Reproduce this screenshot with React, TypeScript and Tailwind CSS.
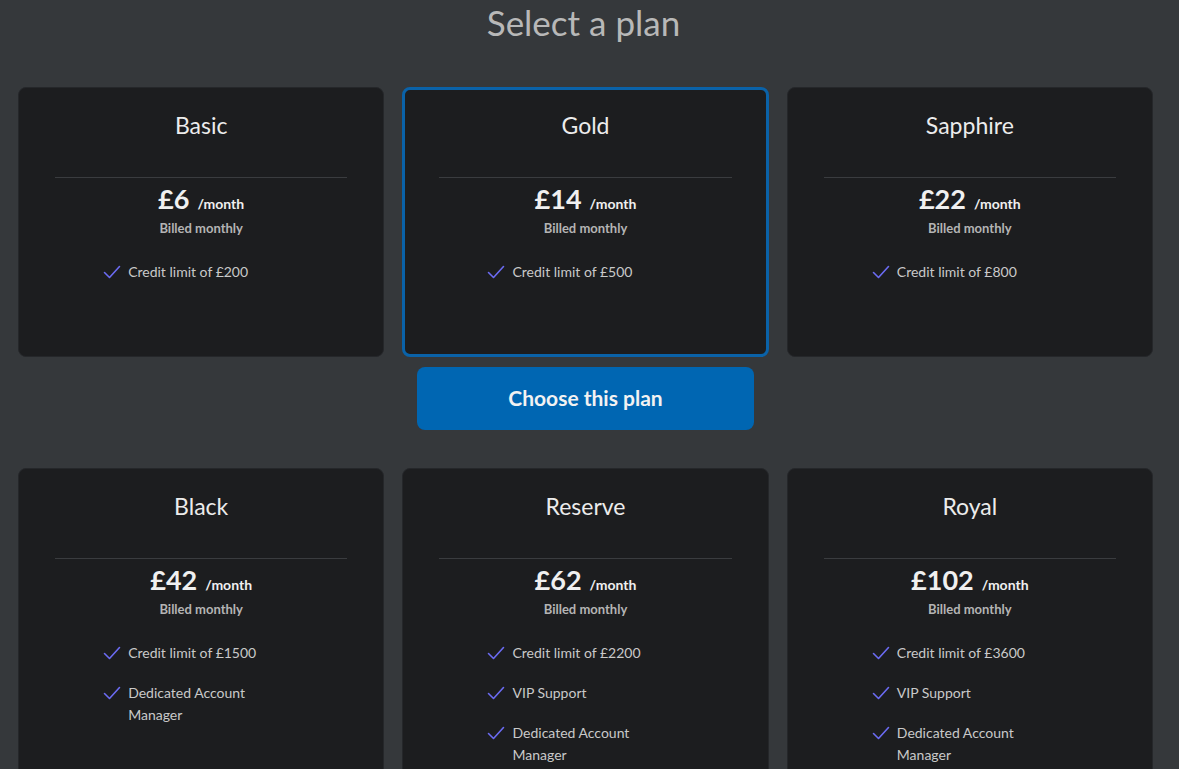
import React from "react";

interface Plan {
    name: string;
    price: number;
    features: string[];
}

const plans: Plan[] = [
    { name: "Basic", price: 6, features: ["Credit limit of £200"] },
    { name: "Gold", price: 14, features: ["Credit limit of £500"] },
    { name: "Sapphire", price: 22, features: ["Credit limit of £800"] },
    { name: "Black", price: 42, features: ["Credit limit of £1500", "Dedicated Account Manager"] },
    { name: "Reserve", price: 62, features: ["Credit limit of £2200", "VIP Support", "Dedicated Account Manager"] },
    { name: "Royal", price: 102, features: ["Credit limit of £3600", "VIP Support", "Dedicated Account Manager"] },
];

const Check = () => (
    <svg width="18" height="14" viewBox="0 0 18 14" fill="none" className="shrink-0 mt-[4px]">
        <path d="M1.5 7.5L6.5 12.5L16.5 1.5" stroke="#6b6bf2" strokeWidth="1.6" strokeLinecap="round" strokeLinejoin="round" />
    </svg>
);

const PlanCard: React.FC<{ plan: Plan; selected: boolean }> = ({ plan, selected }) => (
    <div className="flex flex-col">
        <div
            className={
                selected
                    ? "flex-1 min-h-[270px] rounded-[8px] bg-[#1c1d1f] border-[3px] border-[#0a62a8] pt-[20px] pb-6 flex flex-col items-center"
                    : "flex-1 min-h-[270px] rounded-[8px] bg-[#1c1d1f] border border-[#25272a] pt-[22px] pb-6 flex flex-col items-center"
            }
        >
            <span className="text-[23px] leading-[30px] text-[#ececec]">{plan.name}</span>
            <div className={selected ? "mt-[37px] h-px bg-[#3a3c3f] w-[calc(100%-68px)]" : "mt-[37px] h-px bg-[#3a3c3f] w-[calc(100%-72px)]"} />
            <div className="mt-[3px] flex items-baseline gap-[8px] text-[#f0f0f0] font-bold">
                <span className="text-[27px] leading-[36px]">£{plan.price}</span>
                <span className="text-[14px]">/month</span>
            </div>
            <span className="mt-[3px] text-[13px] leading-[16px] font-bold text-[#b4b4b4]">Billed monthly</span>
            <ul className="mt-[25px] w-[196px] flex flex-col gap-[18px]">
                {plan.features.map((f) => (
                    <li key={f} className="flex gap-[7px] text-[14px] leading-[22px] text-[#c9c9c9]">
                        <Check />
                        <span>{f}</span>
                    </li>
                ))}
            </ul>
        </div>
        <div className="h-[73px] pt-[10px] px-[15px] flex flex-col">
            {selected && (
                <button className="h-[63px] rounded-[8px] bg-[#0066b2] text-[21px] leading-[28px] pb-[2px] font-bold text-[#f2f2f2]">
                    Choose this plan
                </button>
            )}
        </div>
    </div>
);

export default function App() {
    return (
        <div
            className="min-h-screen bg-[#35383b] pl-[18px] pr-[26px] pb-10"
            style={{ fontFamily: "Lato, 'Noto Sans', sans-serif" }}
        >
            <h1 className="pt-[2px] pr-[4px] text-center text-[35px] leading-[40px] text-[#b8b8b8] font-normal">Select a plan</h1>
            <div className="mt-[45px] grid grid-cols-3 gap-x-[18px] gap-y-[38px]">
                {plans.map((p) => (
                    <PlanCard key={p.name} plan={p} selected={p.name === "Gold"} />
                ))}
            </div>
        </div>
    );
}
